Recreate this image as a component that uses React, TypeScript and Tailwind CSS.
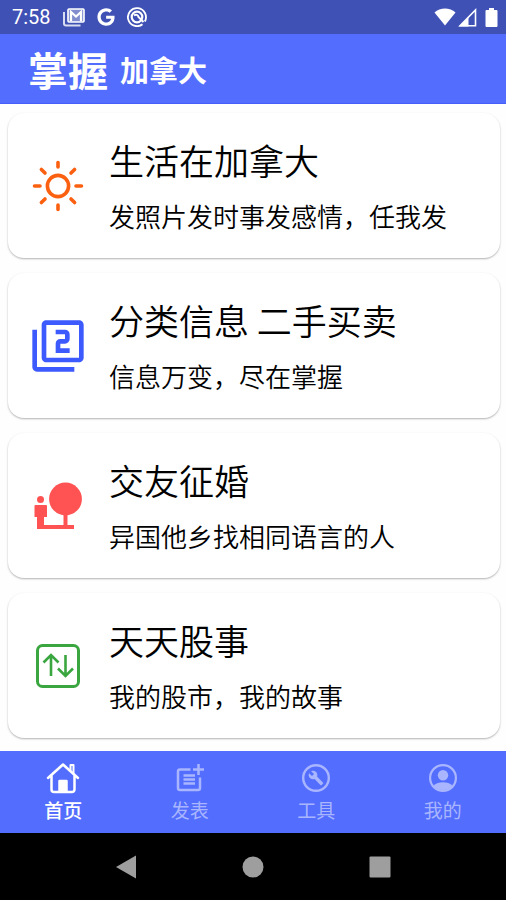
import React, { useState } from 'react';
import { MdFilter2, MdBuild } from 'react-icons/md';
import { FaGoogle } from 'react-icons/fa';

const SunIcon = () => (
  <svg viewBox="0 0 52 52" className="w-13 h-13" fill="none" stroke="currentColor" strokeWidth="3.600" strokeLinecap="round">
    <circle cx="26" cy="26" r="10.600" />
    <path d="M26 2.500v4.500M26 45v4.500M2.500 26H8M44 26h5.500M9.400 9.400l3.600 3.600M39 39l3.600 3.600M42.600 9.400L39 13M13 39l-3.600 3.600" />
  </svg>
);

const PeopleIcon = () => (
  <svg viewBox="0 0 48 48" className="w-12 h-12" fill="currentColor">
    <circle cx="31.500" cy="17" r="16.400" />
    <circle cx="6.500" cy="17.500" r="3.500" />
    <path d="M1.500 23h10.500a1 1 0 0 1 1 1v11h-3v8h19.500V32h4v11H40v4H3V35H0.500V24a1 1 0 0 1 1-1z" />
  </svg>
);

const StockIcon = () => (
  <svg viewBox="0 0 44 44" className="w-11 h-11" fill="none" stroke="currentColor">
    <rect x="1.500" y="1.500" width="41" height="41" rx="5" strokeWidth="3" />
    <path d="M15 32V11M7.500 18.500L15 11l7.500 7.500M29.500 11v21M22 24.500l7.500 7.500 7.500-7.500" strokeWidth="2.600" />
  </svg>
);

const HomeIcon = () => (
  <svg viewBox="0 0 34 32" className="w-8.5 h-8" fill="none" stroke="currentColor" strokeWidth="2.500" strokeLinejoin="round" strokeLinecap="round">
    <path d="M2 16L17 2.500 32 16M5.500 13.500V27.500a2.500 2.500 0 0 0 2.500 2.500H26a2.500 2.500 0 0 0 2.500-2.500V13.500" />
    <path d="M24.500 8.500V3h3v8.500" strokeWidth="2" />
    <path d="M13.500 29V19h7v10z" fill="currentColor" />
  </svg>
);

const PostIcon = () => (
  <svg viewBox="0 0 28 28" className="w-7 h-7" fill="none" stroke="currentColor" strokeWidth="2.500">
    <path d="M14.500 5.500H4a2 2 0 0 0-2 2V24a2 2 0 0 0 2 2h18a2 2 0 0 0 2-2V13.500" />
    <path d="M22.500 0v11M17 5.500h11" />
    <path d="M7.500 11.500h11.500M7.500 15.500h11.500M7.500 19.500h11.500" strokeWidth="2.300" />
  </svg>
);

const ToolsIcon = () => (
  <svg viewBox="0 0 28 28" className="w-7 h-7" fill="none">
    <circle cx="14" cy="14" r="12.800" stroke="currentColor" strokeWidth="2.400" />
    <MdBuild x="6" y="6" width="16" height="16" />
  </svg>
);

const ProfileIcon = () => (
  <svg viewBox="0 0 28 28" className="w-7 h-7" fill="none">
    <circle cx="14" cy="14" r="12.900" stroke="currentColor" strokeWidth="2.200" />
    <circle cx="14" cy="11.200" r="5.200" fill="currentColor" />
    <path d="M4.500 22c2-2.700 6-3.700 9.500-3.700s7.500 1 9.500 3.700a12.800 12.800 0 0 1-19 0z" fill="currentColor" />
  </svg>
);

const cards = [
  { title: '生活在加拿大', text: '发照片发时事发感情，任我发', icon: <SunIcon />, color: 'text-[#fb6011]' },
  { title: '分类信息 二手买卖', text: '信息万变，尽在掌握', icon: <MdFilter2 className="w-14 h-14" />, color: 'text-[#3d5afe]' },
  { title: '交友征婚', text: '异国他乡找相同语言的人', icon: <PeopleIcon />, color: 'text-[#ff5252]' },
  { title: '天天股事', text: '我的股市，我的故事', icon: <StockIcon />, color: 'text-[#3aa63f]' },
];

const tabs = [
  { label: '首页', icon: <HomeIcon /> },
  { label: '发表', icon: <PostIcon /> },
  { label: '工具', icon: <ToolsIcon /> },
  { label: '我的', icon: <ProfileIcon /> },
];

const StatusBar: React.FC = () => (
  <div className="h-[34px] flex items-center justify-between bg-[#3f51b5] text-white pl-3 pr-2">
    <div className="flex items-center">
      <span className="font-[Roboto] text-[20px] leading-6 mr-3">7:58</span>
      {/* Mail */}
      <svg viewBox="0 0 22 20" className="w-[22px] h-5 mr-3" fill="none" stroke="currentColor">
        <path d="M1 5v11.500a2 2 0 0 0 2 2h14.500" strokeWidth="2" opacity="0.800" />
        <rect x="5" y="2" width="16" height="13" rx="1" strokeWidth="1.600" fill="#ffffff" fillOpacity="0.350" />
        <path d="M8 14V5l5 4.500L18 5v9" strokeWidth="2.200" />
      </svg>
      <FaGoogle className="w-[18px] h-[18px] mr-3" />
      {/* Sync */}
      <svg viewBox="0 0 20 20" className="w-5 h-5" fill="none" stroke="currentColor">
        <path d="M15.500 17.200A9 9 0 1 1 17.800 14.500" strokeWidth="1.800" />
        <circle cx="10" cy="10" r="5.300" strokeWidth="2.200" />
        <path d="M7 8.500c2-1.500 4-.5 4.500 1.500l5 5" strokeWidth="2" />
      </svg>
    </div>
    <div className="flex items-center">
      <svg viewBox="0 0 22 18" className="w-[22px] h-[18px] mr-0.5" fill="currentColor">
        <path d="M0.500 4.500C6-.7 16-.7 21.500 4.500L11 17.500z" />
      </svg>
      <svg viewBox="0 0 19 19" className="w-[19px] h-[19px] mr-2" fill="none" stroke="currentColor">
        <path d="M2 17.700L17.500 2v15.700z" strokeWidth="1.600" />
        <path d="M1 18.500L10.500 9v9.500z" fill="currentColor" stroke="none" />
      </svg>
      <svg viewBox="0 0 13 19" className="w-[13px] h-[19px]" fill="currentColor">
        <path d="M4 0h5v2h2.500a1 1 0 0 1 1 1v15a1 1 0 0 1-1 1h-10a1 1 0 0 1-1-1V3a1 1 0 0 1 1-1H4z" />
      </svg>
    </div>
  </div>
);

const App: React.FC = () => {
  const [active, setActive] = useState('首页');

  return (
    <div className="min-h-screen flex flex-col bg-white font-['Noto_Sans_CJK_SC',sans-serif]">
      <StatusBar />

      <header className="h-[70px] flex items-center bg-[#536dfe] border-b border-[#4560f8] text-white pl-7">
        <h1 className="flex items-center gap-3">
          <span className="text-[40px] leading-10 font-bold">掌握</span>
          <span className="text-[29px] leading-10 font-bold">加拿大</span>
        </h1>
      </header>

      <main className="grow flex flex-col gap-[15px] pl-2 pr-1.5 pt-[9px] pb-3 bg-[#fefefe]">
        {cards.map((card) => (
          <a
            key={card.title}
            href="#"
            className="flex items-center h-[145px] rounded-2xl bg-white shadow-[0_1px_2px_rgba(0,0,0,0.3)]"
          >
            <div className={`w-[99px] flex-shrink-0 flex justify-center ${card.color}`}>{card.icon}</div>
            <div className="flex flex-col gap-3 pl-0.5 text-black">
              <h2 className="text-[35px] leading-12 font-[350]">{card.title}</h2>
              <p className="text-[26px] leading-10 font-[350]">{card.text}</p>
            </div>
          </a>
        ))}
      </main>

      <nav className="h-[82px] flex bg-[#536dfe]">
        {tabs.map((tab) => (
          <button
            key={tab.label}
            type="button"
            onClick={() => setActive(tab.label)}
            className={`flex-1 flex flex-col items-center pt-[11px] ${active === tab.label ? 'text-white font-medium' : 'text-[#a9b6ff]'}`}
          >
            <span className="h-8 flex items-center">{tab.icon}</span>
            <span className="text-[19px] leading-8">{tab.label}</span>
          </button>
        ))}
      </nav>

      {/* System navigation */}
      <div className="h-[67px] flex items-center px-[62px] bg-black text-[#9e9e9e]">
        <button type="button" aria-label="Back" className="flex-1 flex justify-center">
          <svg viewBox="0 0 22 24" className="w-[22px] h-6" fill="currentColor"><path d="M21 0.500v23L1 12z" /></svg>
        </button>
        <button type="button" aria-label="Home" className="flex-1 flex justify-center">
          <svg viewBox="0 0 22 22" className="w-[22px] h-[22px]" fill="currentColor"><circle cx="11" cy="11" r="10.500" /></svg>
        </button>
        <button type="button" aria-label="Recents" className="flex-1 flex justify-center">
          <svg viewBox="0 0 22 22" className="w-[22px] h-[22px]" fill="currentColor"><rect x="0.500" y="0.500" width="21" height="21" rx="1" /></svg>
        </button>
      </div>
    </div>
  );
};

export default App;
